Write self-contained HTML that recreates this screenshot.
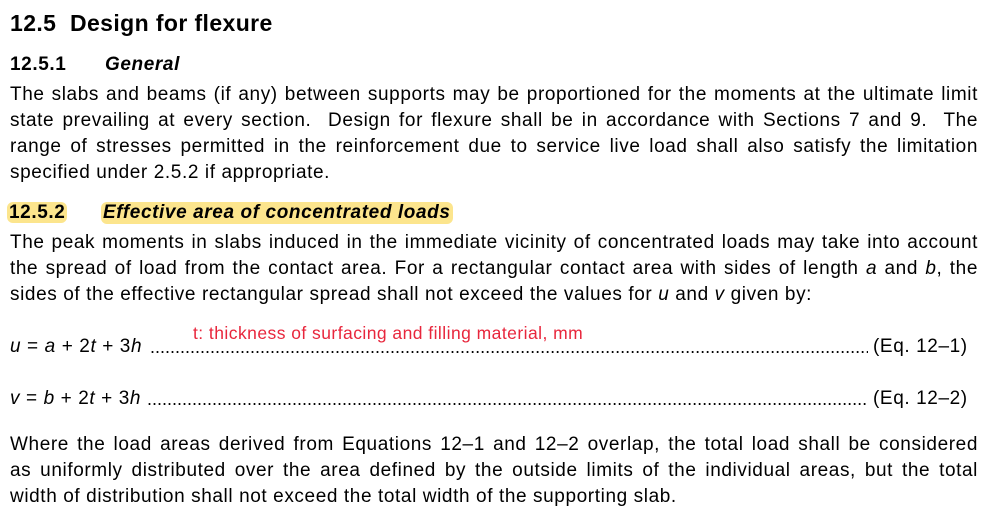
<!DOCTYPE html>
<html><head><style>
body{margin:0;width:994px;height:513px;background:#fff;font-family:"Liberation Sans",Arial,sans-serif;color:#000;position:relative;overflow:hidden}
.l{position:absolute;left:10px;width:968px;font-size:19px;letter-spacing:0.6px;line-height:22px;white-space:nowrap}
.j{text-align:justify;text-align-last:justify;white-space:normal}
.h{font-weight:bold}
.hl{background:#fce58d;border-radius:6px;padding:0 2px}
i{font-style:italic}
.dots{position:absolute;overflow:hidden;white-space:nowrap;font-size:18px;line-height:22px}
</style></head><body>
<div class="l h" style="top:10px;font-size:23px;letter-spacing:0.4px;line-height:26px">12.5&nbsp; Design for flexure</div>
<div class="l h" style="top:54px">12.5.1<span style="position:absolute;left:95px"><i>General</i></span></div>
<div class="l j" style="top:84px">The slabs and beams (if any) between supports may be proportioned for the moments at the ultimate limit</div>
<div class="l j" style="top:110px">state prevailing at every section.&nbsp; Design for flexure shall be in accordance with Sections 7 and 9.&nbsp; The</div>
<div class="l j" style="top:136px">range of stresses permitted in the reinforcement due to service live load shall also satisfy the limitation</div>
<div class="l" style="top:162px">specified under 2.5.2 if appropriate.</div>
<div class="l h" style="top:202px"><span class="hl" style="margin-left:-3px">12.5.2</span><span class="hl" style="position:absolute;left:91px"><i>Effective area of concentrated loads</i></span></div>
<div class="l j" style="top:232px">The peak moments in slabs induced in the immediate vicinity of concentrated loads may take into account</div>
<div class="l j" style="top:258px">the spread of load from the contact area. For a rectangular contact area with sides of length <i>a</i> and <i>b</i>, the</div>
<div class="l" style="top:284px">sides of the effective rectangular spread shall not exceed the values for <i>u</i> and <i>v</i> given by:</div>
<div class="l" style="top:322px;left:193px;color:#e8263c;font-size:17.5px;letter-spacing:0.45px">t: thickness of surfacing and filling material, mm</div>
<div class="l" style="top:336px"><i>u</i> = <i>a</i> + 2<i>t</i> + 3<i>h</i></div>
<div class="dots" style="top:336px;left:150px;width:718px">..............................................................................................................................................................................................................................</div>
<div class="l" style="top:336px;left:873px;width:auto">(Eq. 12–1)</div>
<div class="l" style="top:388px"><i>v</i> = <i>b</i> + 2<i>t</i> + 3<i>h</i></div>
<div class="dots" style="top:388px;left:147px;width:721px">..............................................................................................................................................................................................................................</div>
<div class="l" style="top:388px;left:873px;width:auto">(Eq. 12–2)</div>
<div class="l j" style="top:434px">Where the load areas derived from Equations 12–1 and 12–2 overlap, the total load shall be considered</div>
<div class="l j" style="top:460px">as uniformly distributed over the area defined by the outside limits of the individual areas, but the total</div>
<div class="l" style="top:486px">width of distribution shall not exceed the total width of the supporting slab.</div>
</body></html>
